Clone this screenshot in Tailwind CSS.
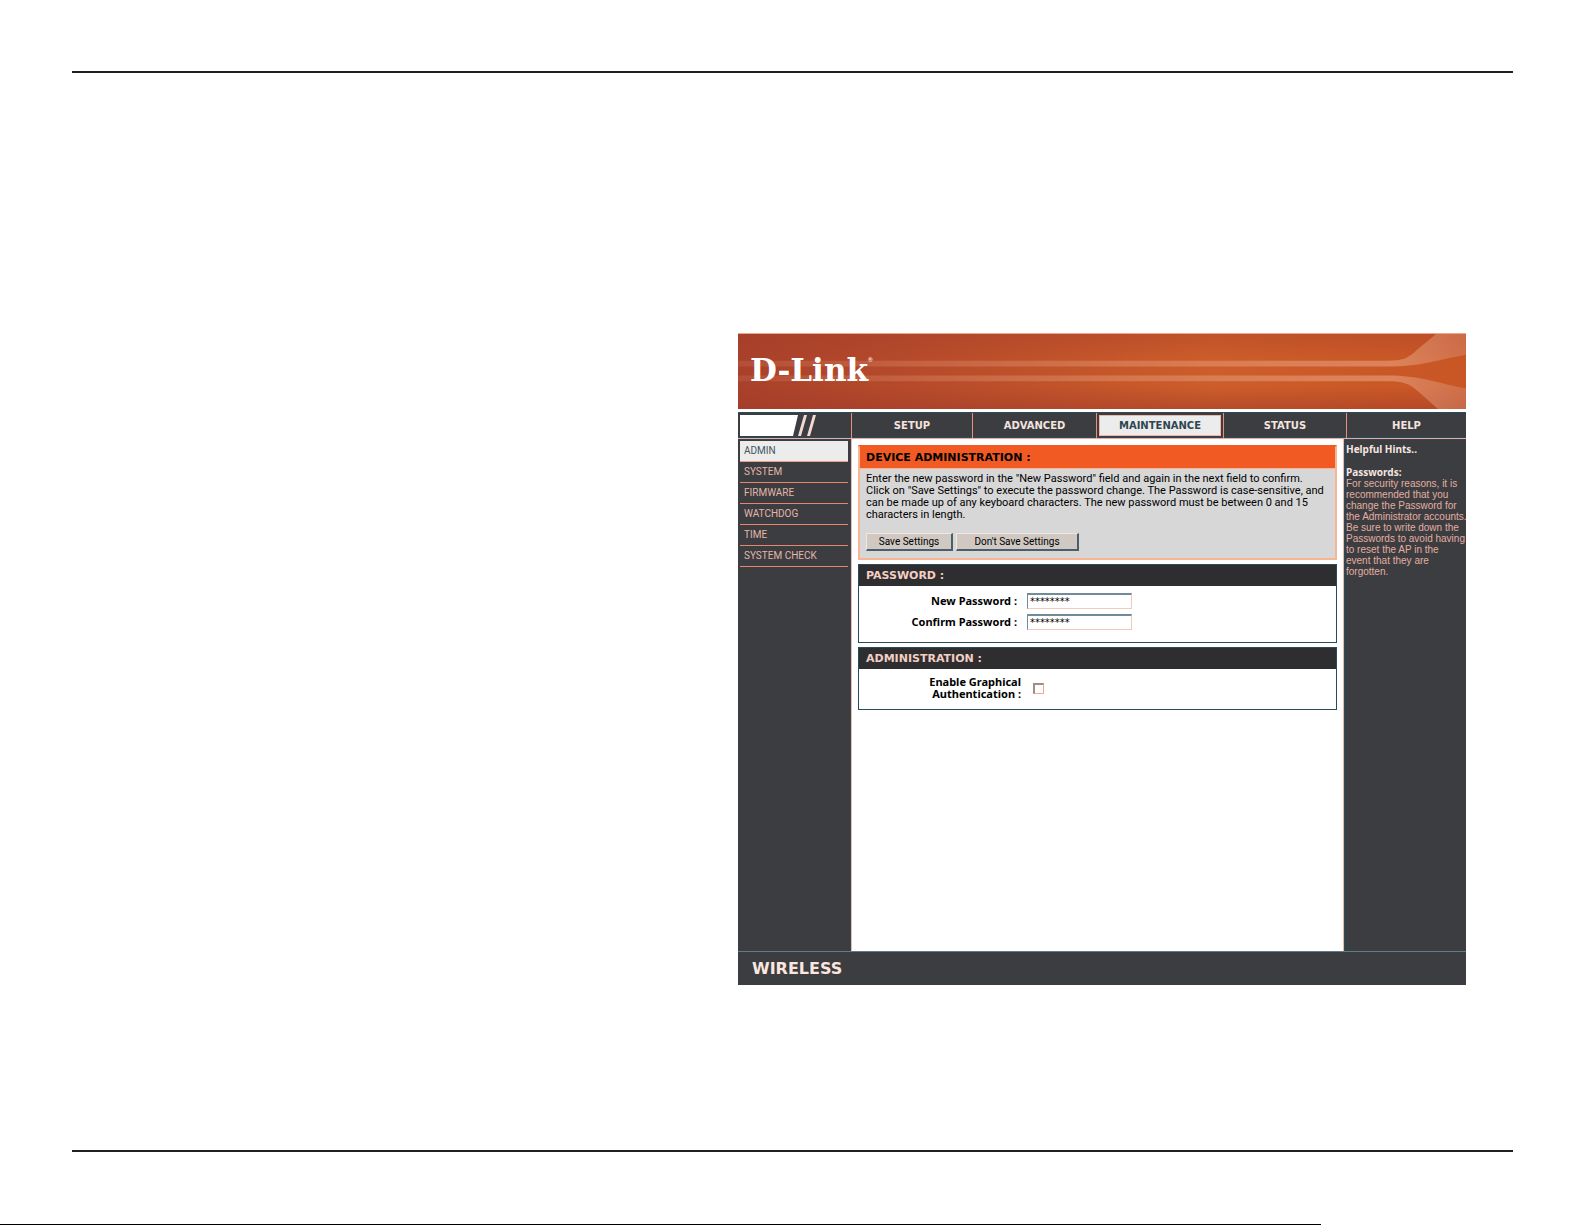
<!DOCTYPE html>
<html lang="en">
<head>
  <meta charset="UTF-8">
  <meta name="viewport" content="width=device-width, initial-scale=1.0">
  <title>D-Link - Device Administration</title>
  <script src="https://cdn.jsdelivr.net/npm/@tailwindcss/browser@4"></script>
</head>
<body class="bg-white font-['Roboto','Liberation_Sans',sans-serif] text-black">
  <div class="min-h-screen flex flex-col">
    <main class="flex-1 flex flex-col px-18 pt-[71px] pb-[72px]">
      <hr class="border-0 h-[2px] bg-[#231f20]">

      <div class="flex-1 flex justify-end items-start pt-[260px] pr-[47px] pb-10">
        <div class="w-[728px] max-w-full">

          <!-- Banner -->
          <header class="relative h-[76px] bg-linear-to-r from-[#a9402a] via-[#cd5d2a] via-65% to-[#c95625] border-t border-[#f0a58c]">
            <svg class="absolute inset-0 w-full h-full" viewBox="0 0 728 76" preserveAspectRatio="none" aria-hidden="true">
              <defs>
                <linearGradient id="beam" x1="0" x2="1" y1="0" y2="0">
                  <stop offset="0" stop-color="#e8a080" stop-opacity="0.15"/>
                  <stop offset="0.5" stop-color="#e8a080" stop-opacity="0.4"/>
                  <stop offset="0.9" stop-color="#e8a080" stop-opacity="0.6"/>
                  <stop offset="1" stop-color="#d88768" stop-opacity="0.5"/>
                </linearGradient>
                <linearGradient id="shade" x1="0" x2="0" y1="0" y2="1">
                  <stop offset="0" stop-color="#a03a2a" stop-opacity="0.3"/>
                  <stop offset="0.35" stop-color="#a03a2a" stop-opacity="0"/>
                  <stop offset="0.7" stop-color="#a03a2a" stop-opacity="0"/>
                  <stop offset="1" stop-color="#a03a2a" stop-opacity="0.5"/>
                </linearGradient>
              </defs>
              <rect width="728" height="76" fill="url(#shade)"/>
              <path d="M0 27H650C664 27 670 25 678 17L698 0H728V21C700 26 686 32 655 33H0Z" fill="url(#beam)"/>
              <path d="M0 42H655C686 43 700 50 728 55V76H700L680 58C671 50 664 48 650 48H0Z" fill="url(#beam)"/>
            </svg>
            <a href="#" class="relative flex items-start pl-3 pt-[18px] text-white">
              <span class="font-['DejaVu_Serif',serif] font-bold text-[31px] leading-[36px]">D-Link</span>
              <span class="text-[6px] leading-[8px] pt-1">®</span>
            </a>
          </header>

          <!-- Main tabs -->
          <nav class="mt-[3px] grid grid-cols-[113fr_121fr_124fr_127fr_123fr_120fr] h-[26px] bg-[#3b3d41] border-y border-[#2b4b58] text-[10px] leading-[16px] font-bold font-['DejaVu_Sans',sans-serif] text-[#f5e4df] text-center">
            <div class="p-[2px]">
              <svg class="block h-[21px]" width="76" height="21" viewBox="0 0 76 21" aria-hidden="true">
                <path d="M0 0H58L53 21H0Z" fill="#fff"/>
                <path d="M64 0H67L61 21H58ZM73 0H76L70 21H67Z" fill="#f4d9d0"/>
              </svg>
            </div>
            <a href="#" class="flex items-center justify-center border-l border-[#e8907c]">SETUP</a>
            <a href="#" class="flex items-center justify-center border-l border-[#e8907c]">ADVANCED</a>
            <a href="#" class="flex border-l border-[#e8907c] p-[2px]"><span class="flex-1 flex items-center justify-center bg-[#ececec] border border-[#f0b3a4] text-[#2e4650]">MAINTENANCE</span></a>
            <a href="#" class="flex items-center justify-center border-l border-[#e8907c]">STATUS</a>
            <a href="#" class="flex items-center justify-center border-l border-[#e8907c]">HELP</a>
          </nav>

          <div class="grid grid-cols-[113px_minmax(0,1fr)_122px] min-h-[513px] border-t border-[#f0a898]">
            <!-- Side menu -->
            <aside class="bg-[#3b3d41] border-t border-r border-[#2b4b58] px-[2px] pt-px text-[10px] leading-[20px] text-[#e5b5a8]">
              <ul>
                <li class="bg-[#ececec] border-b border-[#f09a84]"><a href="#" class="block pl-1 text-[#44545c]">ADMIN</a></li>
                <li class="border-b border-[#e8856a]"><a href="#" class="block pl-1">SYSTEM</a></li>
                <li class="border-b border-[#e8856a]"><a href="#" class="block pl-1">FIRMWARE</a></li>
                <li class="border-b border-[#e8856a]"><a href="#" class="block pl-1">WATCHDOG</a></li>
                <li class="border-b border-[#e8856a]"><a href="#" class="block pl-1">TIME</a></li>
                <li class="border-b border-[#e8856a]"><a href="#" class="block pl-1">SYSTEM CHECK</a></li>
              </ul>
            </aside>

            <!-- Content -->
            <form class="border-x border-[#f5b5a5] px-[6px] pt-[6px] flex flex-col gap-1">
              <section class="border-2 border-[#f9b591] border-t-[#f15a22] bg-[#d7d7d7]">
                <h1 class="bg-[#f15a22] border-b border-[#f9b591] px-[6px] text-[11px] leading-[21px] font-bold font-['DejaVu_Sans',sans-serif]">DEVICE ADMINISTRATION :</h1>
                <div class="px-[6px] pt-1 pb-[7px]">
                  <p class="text-[11px] leading-[12px] sm:whitespace-nowrap">
                    Enter the new password in the "New Password" field and again in the next field to confirm.<br>
                    Click on "Save Settings" to execute the password change. The Password is case-sensitive, and<br>
                    can be made up of any keyboard characters. The new password must be between 0 and 15<br>
                    characters in length.
                  </p>
                  <div class="flex gap-[3px] mt-3">
                    <button type="button" class="w-[87px] h-[18px] bg-[#d0c8c2] border border-[#f3e6df] border-r-2 border-b-2 border-r-[#4b5f68] border-b-[#4b5f68] text-[10px] leading-[14px]">Save Settings</button>
                    <button type="button" class="w-[123px] h-[18px] bg-[#d0c8c2] border border-[#f3e6df] border-r-2 border-b-2 border-r-[#4b5f68] border-b-[#4b5f68] text-[10px] leading-[14px]">Don't Save Settings</button>
                  </div>
                </div>
              </section>

              <section class="border border-[#2b4b58]">
                <h2 class="bg-[#2e2e31] px-[7px] text-[11px] leading-[21px] font-bold font-['DejaVu_Sans',sans-serif] text-[#f3cfc3]">PASSWORD :</h2>
                <div class="grid grid-cols-[158px_1fr] gap-x-[10px] gap-y-[5px] pt-[7px] pb-3 text-[11px] leading-[16px]">
                  <label for="newPassword" class="font-bold font-['Noto_Sans',sans-serif] text-right">New Password :</label>
                  <input type="text" id="newPassword" name="newPassword" value="********" autocomplete="off" class="w-[105px] h-[16px] px-[2px] font-['DejaVu_Sans_Condensed','DejaVu_Sans',sans-serif] border border-[#f0cabd] border-t-2 border-t-[#6f8c98] border-l-[#6f8c98] bg-white">
                  <label for="confirmPassword" class="font-bold font-['Noto_Sans',sans-serif] text-right">Confirm Password :</label>
                  <input type="text" id="confirmPassword" name="confirmPassword" value="********" autocomplete="off" class="w-[105px] h-[16px] px-[2px] font-['DejaVu_Sans_Condensed','DejaVu_Sans',sans-serif] border border-[#f0cabd] border-t-2 border-t-[#6f8c98] border-l-[#6f8c98] bg-white">
                </div>
              </section>

              <section class="border border-[#2b4b58]">
                <h2 class="bg-[#2e2e31] px-[7px] text-[11px] leading-[21px] font-bold font-['DejaVu_Sans',sans-serif] text-[#f3cfc3]">ADMINISTRATION :</h2>
                <div class="grid grid-cols-[162px_1fr] gap-x-[12px] items-center pt-[7px] pb-[9px] text-[11px] leading-[12px]">
                  <label for="graphicalAuth" class="font-bold font-['Noto_Sans',sans-serif] text-right">Enable Graphical<br>Authentication :</label>
                  <input type="checkbox" id="graphicalAuth" name="graphicalAuth" class="appearance-none w-[11px] h-[11px] bg-white border border-[#f0a898] border-t-2 border-l-2 border-t-[#a08d88] border-l-[#a08d88]">
                </div>
              </section>
            </form>

            <!-- Help column -->
            <aside class="bg-[#3b3d41] border-t border-l border-[#2b4b58] pl-px pt-1 text-[10px] leading-[11px] text-[#e5ada0] font-['Liberation_Sans',sans-serif] sm:whitespace-nowrap">
              <h2 class="font-bold font-['Noto_Sans',sans-serif] text-[#f7e6e0]">Helpful Hints..</h2>
              <h3 class="font-bold font-['Noto_Sans',sans-serif] text-[#f7e6e0] mt-3">Passwords:</h3>
              <p>For security reasons, it is<br>recommended that you<br>change the Password for<br>the Administrator accounts.<br>Be sure to write down the<br>Passwords to avoid having<br>to reset the AP in the<br>event that they are<br>forgotten.</p>
            </aside>
          </div>

          <footer class="h-[34px] bg-[#3b3d41] border-t border-[#5d8088] pl-[14px] flex items-center font-['DejaVu_Sans',sans-serif] font-bold text-[16px] leading-[16px] text-[#fbe6df]">WIRELESS</footer>
        </div>
      </div>

      <hr class="border-0 h-[2px] bg-[#231f20]">
    </main>
    <hr class="border-0 h-px w-5/6 bg-black">
  </div>
</body>
</html>
